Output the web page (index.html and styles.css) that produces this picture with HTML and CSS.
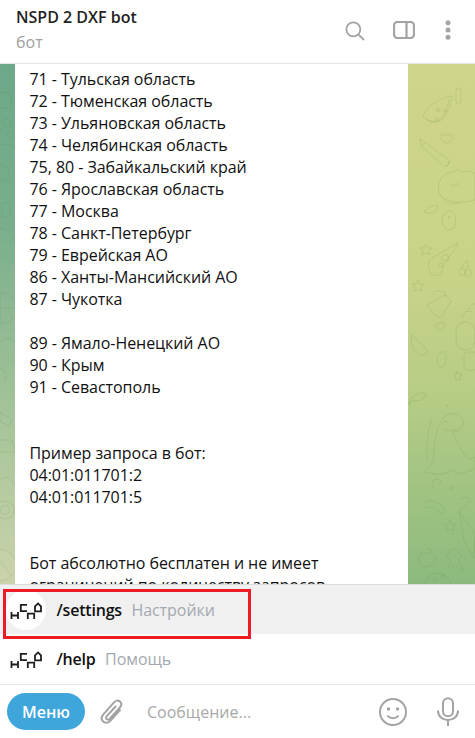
FILE: index.html
```html
<!DOCTYPE html>
<html lang="ru">
<head>
<meta charset="utf-8">
<title>NSPD 2 DXF bot</title>
<link rel="stylesheet" href="styles.css">
</head>
<body>
<svg class="defs" aria-hidden="true"><defs>
  <symbol id="logo" viewBox="0 0 40 40">
    <g fill="none" stroke="#1f1f1f" stroke-width="1.800">
      <path d="M5.500 22v7M12 22v7M5.500 25.500H12"/>
      <path d="M21 14.800h-6.200v6.400H21"/>
      <path d="M21.800 29v-5.400h6.400V29"/>
      <path d="M29 21.400v-5l3-3 3 3v5z"/>
    </g>
  </symbol>
</defs></svg>
<div class="app">
  <header class="top">
    <div class="peer">
      <div class="name">NSPD 2 DXF bot</div>
      <div class="status">бот</div>
    </div>
    <div class="tools">
      <svg class="ic-search" viewBox="0 0 24 24"><circle cx="10" cy="10" r="8.400"/><path d="M16 16l6.800 6.800"/></svg>
      <svg class="ic-panel" viewBox="0 0 22 18"><rect x="1" y="1" width="20" height="16" rx="3.500"/><path d="M13.500 1v16"/></svg>
      <svg class="ic-more" viewBox="0 0 6 20"><circle cx="3" cy="2.800" r="2.500"/><circle cx="3" cy="10" r="2.500"/><circle cx="3" cy="17.200" r="2.500"/></svg>
    </div>
  </header>

  <main class="chat">
    <svg class="doodles" viewBox="0 64 475 520" aria-hidden="true">
      <path d="M423 116c8 9 24 12 29-20-12 2-24 9-29 20z"/><path d="M426 119c7 5 19 6 23-20"/><circle cx="438" cy="110" r="1.400"/><circle cx="445" cy="111" r="1.400"/><circle cx="437" cy="119" r="1.400"/>
      <path d="M420 139l5 3 25 19-3 5-3 0-23-20z"/><path d="M425 142l-3 4M447 166l3-5"/>
      <path d="M446 143c-8-4-7-9-3-9 2 0 3 1 3 2 1-2 6-3 7 0 1 3-3 6-7 7z"/>
      <rect x="456" y="88" width="5" height="16" rx="2.500"/>
      <path d="M439 192c-3-14 8-20 14-20l6-2 3 2 8-1 5 2v27c-10 3-32 5-36-8z"/><path d="M449 183c3 4 8 3 10-1"/><path d="M445 199c-2 6 14 6 15 2"/>
      <path d="M424 212c4-6 10-7 14-6-1 6-6 9-14 6z"/>
      <path d="M442 222c0-9 5-12 9-11 5 2 5 9 4 15-1 4-4 2-5 4-2 1-5-1-8-8z"/><circle cx="449" cy="217" r=".8"/>
      <path d="M458 243l-26 15c-3 1-5 7-3 12 3 7 12 8 13 0l2-6 11-15z"/><circle cx="445" cy="258" r="3.500"/><circle cx="441" cy="265" r="2"/>
      <circle cx="462" cy="272" r="3.500"/><circle cx="468" cy="273" r="3.500"/><path d="M462 268c1-4 3-6 5-8l1 9"/>
      <path d="M426 244l2 4 4 0-3 3 1 4-4-2-4 2 1-4-3-3 4 0z"/>
      <path d="M418 280l2 4 4 0-3 3 1 4-4-2-4 2 1-4-3-3 4 0z"/>
      <path d="M427 305l18-10 6 6-10 17-5-2z"/><path d="M433 295c0-4 6-5 8-3 3-1 6 2 4 5"/>
      <path d="M468 310c2-6 7-6 7-6M462 318c0-6 6-8 10-6"/>
      <path d="M412 335l16 16-6 5c-9-5-12-13-10-21z"/><path d="M437 358c2-6 6-8 8-5 3 4 1 14-4 14-3 0-4-4-4-9z"/>
      <path d="M440 330c-5-2-6-6-3-7 2 0 2 1 3 1 1-2 4-2 5 0 0 3-2 5-5 6z"/>
      <rect x="456" y="322" width="19" height="28" rx="9"/><rect x="464" y="352" width="14" height="18" rx="4"/>
      <path d="M457 371l2 3 3 0-2 3 1 3-3-1-3 1 1-3-2-3 3 0z"/>
      <path d="M425 472c3-5 8-6 9-16 0-15 2-28 8-36 4-8 14-8 18-4 5 4 4 11-1 14-3 2-5 2-7 2l3 5c4 9 8 18 15 22l5-2v12c-12 4-15 7-23 1-4 4-14 6-27 2z"/>
      <path d="M442 425c2-3 4-4 6-3"/><path d="M445 429c3 2 9 3 13-1"/><circle cx="447" cy="406" r="1"/>
      <path d="M427 460c-1-16 1-31 5-42"/>
      <path d="M415 395c5-2 8-3 11-1-2 6-6 8-11 6l-5 2-1 3 2-7z"/>
      <path d="M436 489c-6-1-5-10 1-10 4 0 5 5 1 6"/><circle cx="451" cy="488" r="1.500"/>
      <path d="M424 503c4-3 8-3 14 0 4 2 7 5 6 9-1 2-4 2-5 0-3-4-8-6-11-4-3 1-5-3-4-5z"/>
      <path d="M450 520l2 4 4 0-3 3 1 4-4-2-4 2 1-4-3-3 4 0z"/><path d="M459 500c5-4 10-3 12 0l-5 5c-2 0-6 5-7 7"/>
      <path d="M459 512l16 21-1 25-10-18z"/>
      <path d="M420 554c4-2 12-1 16 3 0 6-7 12-14 9-4-3-4-8-2-12z"/><path d="M426 549a5 5 0 0 1 6 3"/>
      <path d="M449 551c3-3 7-2 8 1l5 4-3 2 1 7 4 5-3 1-6-5-5 3-2-2 3-5-4-5z"/>
      <circle cx="438" cy="586" r="13"/><circle cx="435" cy="579" r="1.800"/><circle cx="443" cy="577" r="1.800"/>
      <path d="M11 67c-3 4-2 9 1 13"/><circle cx="4" cy="100" r="8"/><path d="M0 92c6 0 12 5 12 12"/>
      <path d="M5 118l6 3-3 6-5-2z"/><circle cx="10" cy="135" r="3"/><path d="M0 145c4-2 12 0 15 3"/><path d="M0 165c8 0 10 6 8 12-2 4-6 4-8 3"/>
      <rect x="2" y="203" width="8" height="14" rx="2"/><path d="M0 228c6 0 14 6 15 14M0 250l12 12"/>
      <circle cx="0" cy="308" r="16"/><path d="M0 292v32M-12 308h28"/>
      <path d="M2 342c4-6 9-4 13 0"/><path d="M0 368c6 2 8 8 4 14"/>
      <path d="M0 412l12 8-3 6-9-5z"/><path d="M0 440h12l3 12H0"/>
      <path d="M0 480c8-6 13 0 15 6"/><circle cx="5" cy="510" r="9"/><circle cx="5" cy="510" r="4.500"/>
      <circle cx="0" cy="565" r="16"/><path d="M-8 552l20 24"/>
    </svg>
    <article class="msg">
      <p>71 - Тульская область<br>72 - Тюменская область<br>73 - Ульяновская область<br>74 - Челябинская область<br>75, 80 - Забайкальский край<br>76 - Ярославская область<br>77 - Москва<br>78 - Санкт-Петербург<br>79 - Еврейская АО<br>86 - Ханты-Мансийский АО<br>87 - Чукотка</p>
      <p>89 - Ямало-Ненецкий АО<br>90 - Крым<br>91 - Севастополь</p>
      <p class="gap">Пример запроса в бот:<br>04:01:011701:2<br>04:01:011701:5</p>
      <p class="gap">Бот абсолютно бесплатен и не имеет<br>ограничений по количеству запросов</p>
    </article>
  </main>

  <section class="suggest">
    <div class="cmd active">
      <span class="ava"><svg class="logo"><use href="#logo"/></svg></span>
      <b>/settings</b><span class="desc">Настройки</span>
    </div>
    <div class="cmd">
      <span class="ava"><svg class="logo"><use href="#logo"/></svg></span>
      <b>/help</b><span class="desc">Помощь</span>
    </div>
    <div class="marker"></div>
  </section>

  <footer class="compose">
    <button class="menu">Меню</button>
    <svg class="ic-clip" viewBox="0 0 24 27"><path d="M20.500 11.500L10.600 22.600c-2.400 2.600-5.400 2.800-7.400 1-2-1.900-2-4.800.2-7.300L14 4.300c1.700-1.900 4.200-2.300 6-.7 1.700 1.600 1.600 4-.1 5.900L9.800 20.700c-.9 1-2.200 1.200-3.100.4-.9-.8-.8-2 .1-3L16 8"/></svg>
    <span class="placeholder">Сообщение...</span>
    <svg class="ic-smile" viewBox="0 0 28 28"><circle cx="14" cy="14" r="13"/><circle class="dot" cx="9.500" cy="11" r="1.700"/><circle class="dot" cx="18.500" cy="11" r="1.700"/><path d="M8.500 17.500c2.500 3.500 8.500 3.500 11 0"/></svg>
    <svg class="ic-mic" viewBox="0 0 22 29"><rect x="6" y="1.200" width="10" height="18" rx="5"/><path d="M1 13.500c0 6 4.500 9.500 10 9.500s10-3.500 10-9.500M11 23v6"/></svg>
  </footer>
</div>
</body>
</html>
```
FILE: styles.css
```css
* { box-sizing: border-box; }
html, body { margin: 0; height: 100%; }
body { font: 16px/22px "Open Sans", "Noto Sans", sans-serif; color: #111; background: #fff; overflow: hidden; }
.defs { display: none; }
.app { display: flex; flex-direction: column; width: 475px; height: 738px; }

.top { flex: 0 0 64px; display: flex; justify-content: space-between; border-bottom: 1px solid #e4e4e4; padding: 6px 24px 0 16px; }
.name { font-weight: 600; color: #222; }
.status { margin-top: 3px; color: #a0a0a0; }
.tools { display: flex; align-items: flex-start; padding-top: 14px; }
.tools svg { fill: none; stroke: #a3a3a3; stroke-width: 2.200; display: block; }
.ic-search { width: 20px; height: 20px; margin-top: 1px; }
.ic-panel { width: 22px; height: 18px; margin: 1px 0 0 28px; }
.tools .ic-more { width: 6px; height: 20px; margin-left: 30px; fill: #a3a3a3; stroke: none; }

.chat {
  flex: 0 0 520px; position: relative; overflow: hidden; padding: 0 67px 0 15px;
  background: linear-gradient(to bottom, #cfd58b 0, #c9d388 40%, #b8cd86 62%, #8cba7e 100%);
}
.chat::before {
  content: ""; position: absolute; left: 0; top: 0; bottom: 0; width: 15px;
  background: linear-gradient(to bottom, #6ca988 0, #78ae8c 30%, #a8c59a 70%, #cbd3aa 100%);
}
.doodles { position: absolute; left: 0; top: 0; width: 475px; height: 520px; fill: none; stroke: #5e8a3c; stroke-opacity: .16; stroke-width: 1; }
.msg { position: relative; height: 540px; background: #fff; padding: 4px 14px 0 14.500px; color: #111; letter-spacing: -.05px; }
.msg p { margin: 0 0 22px; white-space: nowrap; }
.msg p.gap { margin-top: 44px; }

.suggest { flex: 0 0 100px; position: relative; border-top: 1px solid #dcdcdc; }
.cmd { height: 49px; display: flex; align-items: center; padding-left: 6px; font-size: 16px; }
.cmd.active { background: #f0f0f0; }
.cmd b { font-weight: 600; color: #111; margin-left: 10.500px; letter-spacing: -.2px; }
.desc { color: #a3a9b0; margin-left: 9.500px; letter-spacing: -.05px; }
.ava { width: 40px; height: 40px; border-radius: 50%; display: block; }
.active .ava { background: #fff; }
.logo { width: 40px; height: 40px; display: block; }
.marker { position: absolute; left: 3px; top: 4px; width: 248px; height: 50px; border: 3px solid #ed1c24; pointer-events: none; }

.compose { flex: 1; display: flex; align-items: center; border-top: 1px solid #e4e4e4; padding: 0 16px 0 7px; position: relative; }
.menu { width: 78px; height: 37px; border: 0; border-radius: 19px; background: #3fa6dc; color: #fff; font: 600 16px/22px "Open Sans", sans-serif; padding: 0; }
.compose svg { fill: none; stroke: #a3a3a3; stroke-width: 2; display: block; flex: none; }
.ic-clip { width: 24px; height: 27px; margin-left: 15px; }
.placeholder { flex: 1; margin-left: 23px; color: #a8a8a8; }
.ic-smile { width: 28px; height: 28px; }
.compose .dot { fill: #a3a3a3; stroke: none; }
.ic-mic { width: 22px; height: 29px; margin-left: 30px; }
```
